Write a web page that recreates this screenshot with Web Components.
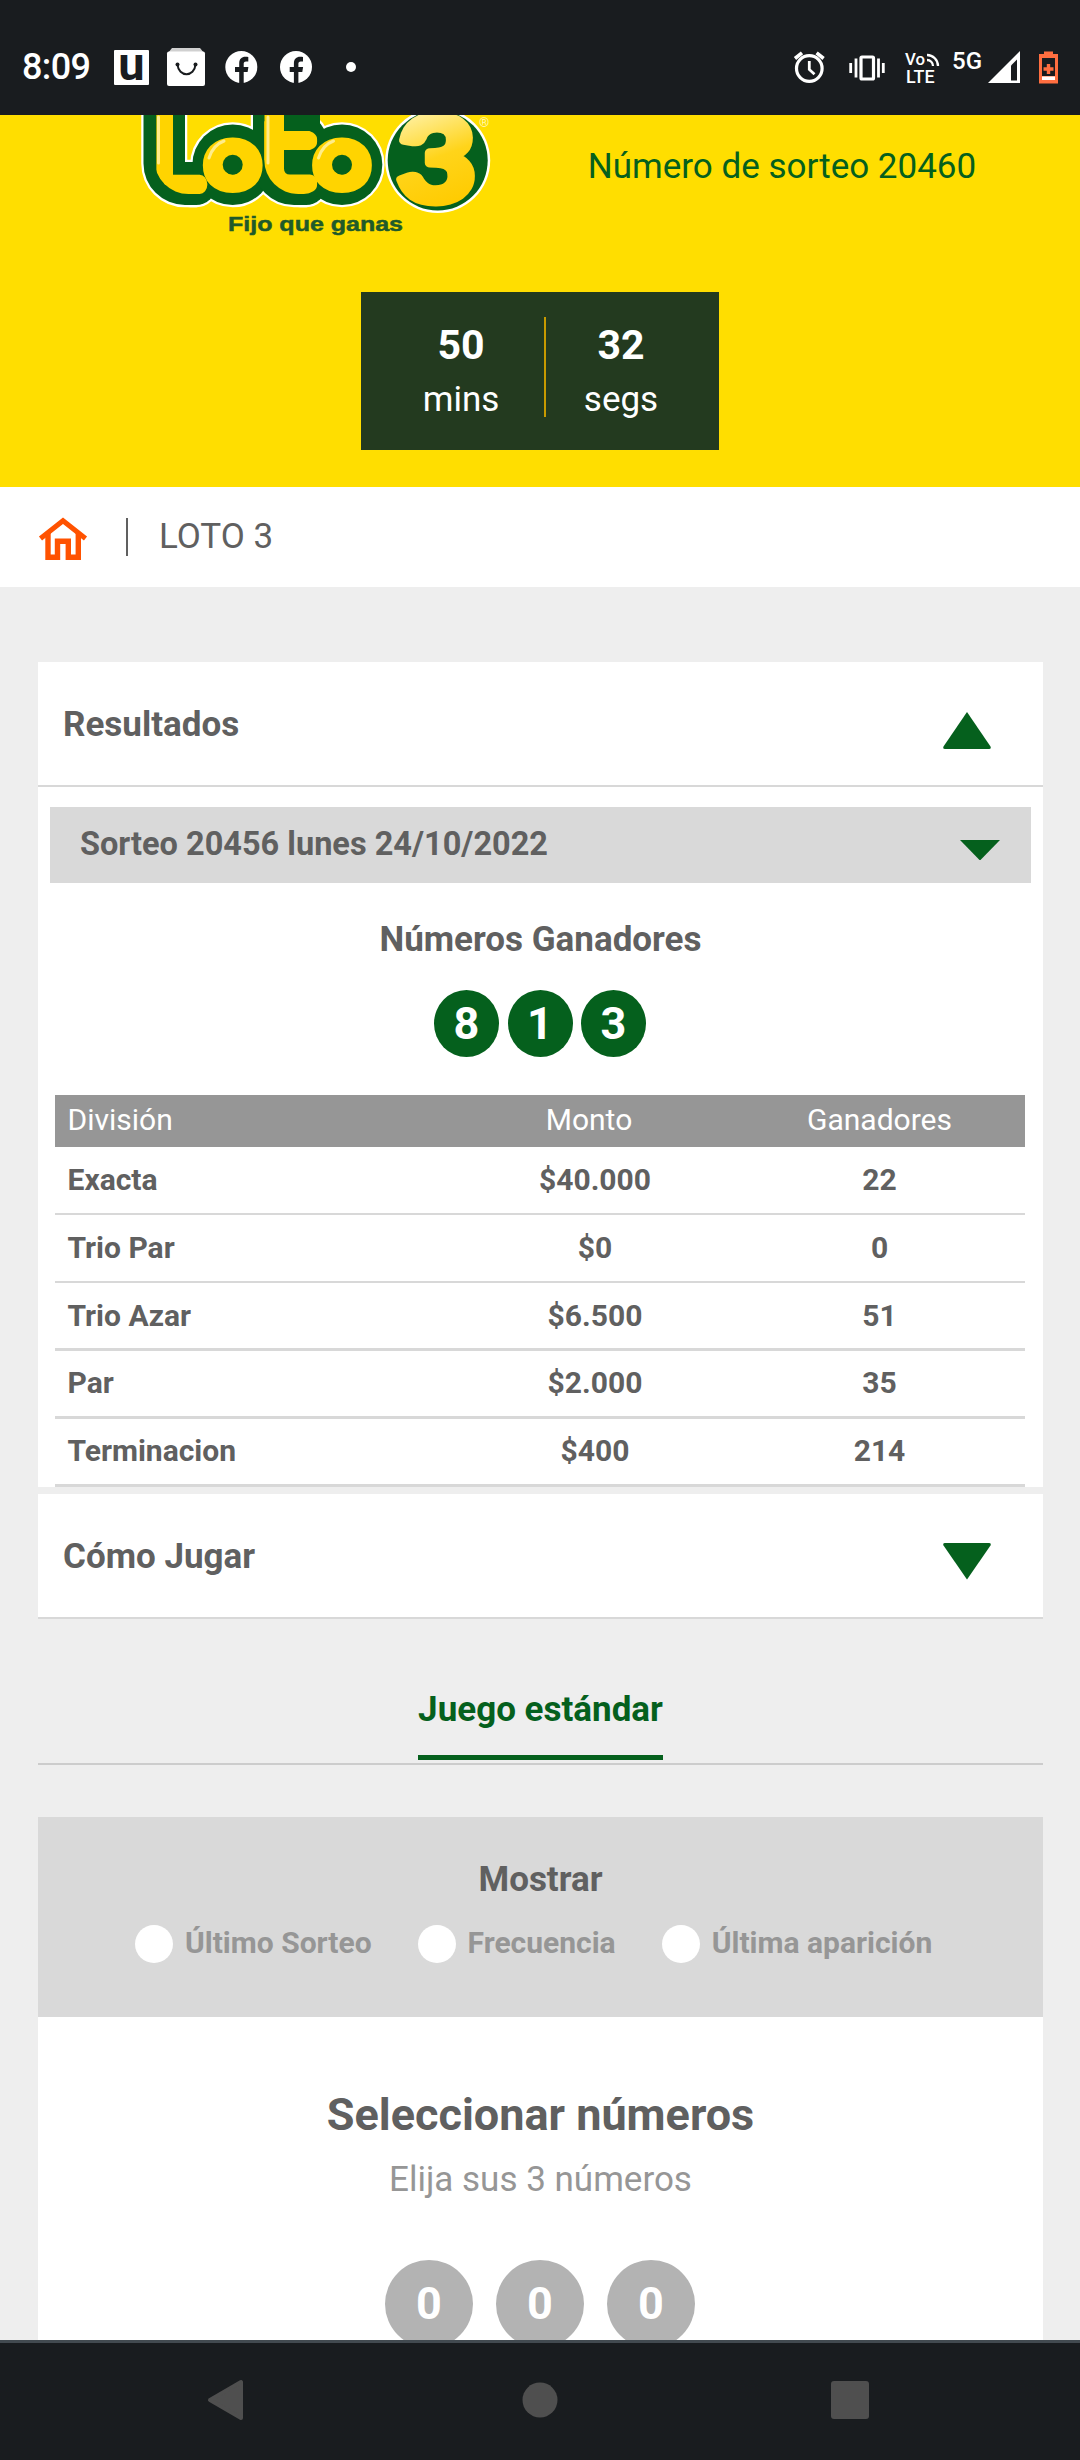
<!DOCTYPE html>
<html lang="es">
<head>
<meta charset="utf-8">
<title>Loto 3</title>
<style>
	html { height: 2460px; overflow: hidden; }
	body {
		margin: 0;
		width: 1080px;
		height: 2460px;
		overflow: hidden;
		display: flex;
		flex-direction: column;
		background: #eee;
		font-family: Roboto, "Liberation Sans", sans-serif;
		font-size: 35px;
		color: #606060;
		--green: #05601d;
		--line: #d8d8d8;
	}
	main { flex: 1; min-height: 0; overflow: hidden; padding: 75px 37px 0 38px; }
</style>
</head>
<body>
<status-bar></status-bar>
<game-header>
	<loto-logo slot="logo"></loto-logo>
	<span slot="draw">Número de sorteo 20460</span>
	<count-down slot="timer" mins="50" segs="32"></count-down>
</game-header>
<bread-crumb>LOTO 3</bread-crumb>
<main>
	<accordion-card open>
		<span slot="title">Resultados</span>
		<draw-select>Sorteo 20456 lunes 24/10/2022</draw-select>
		<winning-numbers numbers="8,1,3">Números Ganadores</winning-numbers>
		<prize-table></prize-table>
	</accordion-card>
	<accordion-card>
		<span slot="title">Cómo Jugar</span>
	</accordion-card>
	<game-tabs>Juego estándar</game-tabs>
	<show-options>
		<span slot="title">Mostrar</span>
		<radio-option>Último Sorteo</radio-option>
		<radio-option>Frecuencia</radio-option>
		<radio-option>Última aparición</radio-option>
	</show-options>
	<number-picker>
		<span slot="title">Seleccionar números</span>
		<span slot="hint">Elija sus 3 números</span>
		<number-ball size="big">0</number-ball>
		<number-ball size="big">0</number-ball>
		<number-ball size="big">0</number-ball>
	</number-picker>
</main>
<nav-bar></nav-bar>

<script>
class StatusBar extends HTMLElement {

	constructor() {
		super();
		this.shadow = this.attachShadow({mode: 'open'});
	}
	connectedCallback() {
		this.shadow.innerHTML = `
		<style>
		:host {
			display: flex;
			justify-content: space-between;
			flex: none;
			height: 115px;
			background: #191c1f;
			color: #fff;
		}
		.side { display: flex; align-items: center; height: 134px; }
		.time { width: 90px; margin-left: 22px; font-size: 36px; line-height: 44px; font-weight: 500; letter-spacing: -0.6px; white-space: nowrap; }
		svg { display: block; }
		svg text { font-family: Roboto, sans-serif; fill: #fff; }
		</style>
		<div class="side">
			<span class="time">8:09</span>
			<svg width="250" height="60" viewBox="112 36 250 60">
				<rect x="114" y="49" width="35" height="35" rx="1" fill="#fff"/>
				<text x="131.5" y="78.500" text-anchor="middle" font-size="47" font-weight="700" style="fill:#191c1f">u</text>
				<path d="M172 47h28l4 5h-36z" fill="#d0d0d0"/>
				<rect x="167" y="50.500" width="38" height="34.500" rx="2" fill="#fff"/>
				<path d="M177.500 63.500c1 13 17 13 18 0" fill="none" stroke="#191c1f" stroke-width="2"/>
				<circle cx="177.500" cy="63.500" r="2" fill="#191c1f"/>
				<circle cx="195.500" cy="63.500" r="2" fill="#191c1f"/>
				<g id="fb">
					<circle cx="241.300" cy="66" r="16" fill="#fff"/>
					<path d="M239.200 83v-12h-4.200v-5h4.200v-3.500c0-4.500 2.500-6.700 6.200-6.700 1.100 0 2.100.1 2.900.2v4.500h-2.200c-1.900 0-2.400 1-2.400 2.300v3.200h4.700l-.8 5h-3.900v12z" fill="#191c1f"/>
				</g>
				<use href="#fb" x="54.700"/>
				<circle cx="351" cy="66" r="5" fill="#fff"/>
			</svg>
		</div>
		<div class="side">
			<svg width="290" height="44" viewBox="790 44 290 44">
				<g fill="none" stroke="#fff">
					<circle cx="809.300" cy="67.500" r="12.800" stroke-width="3.200"/>
					<path d="M809.300 60v8.500l5.200 4.700" stroke-width="2.800"/>
					<path d="M795 57.500l7-5.700M823.600 57.500l-7-5.700" stroke-width="3.600"/>
					<rect x="861" y="56" width="12.500" height="22" rx="1" stroke-width="3.200"/>
					<path d="M856 57.500v19M878.500 57.500v19" stroke-width="2.800"/>
					<path d="M850.700 62v10M883.300 62v10" stroke-width="2.800"/>
					<path d="M927 59a6 6 0 0 1 6 6M927 54a11 11 0 0 1 11 11" stroke-width="2.300"/>
				</g>
				<text x="905" y="64" font-size="17" font-weight="500" textLength="20" lengthAdjust="spacingAndGlyphs">Vo</text>
				<text x="906" y="81.500" font-size="17.500" font-weight="500" textLength="28.500" lengthAdjust="spacingAndGlyphs">LTE</text>
				<text x="952" y="67.500" font-size="23.500" font-weight="500" textLength="30" lengthAdjust="spacingAndGlyphs">5G</text>
				<path d="M988 82L1020 50v32z" fill="#fff"/>
				<path d="M1011 64.500l6-6v21h-6z" fill="#191c1f"/>
				<path d="M1044 53v-2.500h9V53h5v29.500h-19V53z" fill="#ff6e40"/>
				<rect x="1042" y="57" width="13" height="18" fill="#191c1f"/>
				<rect x="1042" y="75.500" width="13" height="3.500" fill="#fff"/>
				<path d="M1048.500 63v10M1043.500 68h10" stroke="#ff6e40" stroke-width="3.400"/>
			</svg>
		</div>`;
	}
}

class LotoLogo extends HTMLElement {

	constructor() {
		super();
		this.shadow = this.attachShadow({mode: 'open'});
	}
	connectedCallback() {
		this.shadow.innerHTML = `
		<style>
		:host { display: block; width: 360px; height: 130px; overflow: hidden; }
		svg { display: block; }
		.letter { font-family: Lato, Roboto, sans-serif; font-weight: 100; fill: #ffd400; stroke: #ffd400; stroke-linejoin: round; }
		.tee { font-family: "DejaVu Sans", sans-serif; font-weight: 200; }
		.three { font-family: Lato, sans-serif; font-weight: 700; fill: url(#gold3); stroke: url(#gold3); stroke-linejoin: round; }
		.motto { font-family: "Liberation Sans", Arial, sans-serif; font-weight: 700; font-size: 21px; fill: #1f5a2a; stroke: #1f5a2a; stroke-width: .5; }
		</style>
		<svg width="360" height="130" viewBox="140 115 360 130">
			<defs>
				<linearGradient id="gold3" gradientUnits="userSpaceOnUse" x1="415" y1="112" x2="450" y2="206">
					<stop offset="0" stop-color="#fff0a0"/>
					<stop offset=".5" stop-color="#ffd41a"/>
					<stop offset="1" stop-color="#ffcb00"/>
				</linearGradient>
				<clipPath id="curveL"><path d="M154.500 90h60v104h-26a34 34 0 0 1-34-34z"/></clipPath>
				<clipPath id="curveT"><path d="M264.300 90h60v104h-26a34 34 0 0 1-34-34z"/></clipPath>
				<g id="back">
					<path d="M143.500 90H185v72h12v43h-12a41.500 41.500 0 0 1-41.500-41.500z"/>
					<rect x="170" y="163" width="46" height="42" rx="20"/>
					<circle cx="232.700" cy="164.700" r="40.300"/>
					<path d="M253 90h40v28h17q8 0 14 11v36h-17v40h-13a41 41 0 0 1-41-41z"/>
					<rect x="280" y="163" width="46" height="42" rx="20"/>
					<circle cx="342" cy="164.700" r="40.300"/>
				</g>
			</defs>
			<use href="#back" fill="#fff" stroke="#fff" stroke-width="4.500" stroke-linejoin="round"/>
			<circle cx="437.700" cy="160.500" r="52.500" fill="#fff"/>
			<use href="#back" fill="#05601d"/>
			<circle cx="437.700" cy="160.500" r="50" fill="#05601d"/>
			<g clip-path="url(#curveL)"><text class="letter" x="153" y="184.500" font-size="112" stroke-width="18" textLength="48" lengthAdjust="spacingAndGlyphs">L</text></g>
			<text class="letter" x="208" y="184" font-size="76" stroke-width="18" textLength="49.500" lengthAdjust="spacingAndGlyphs">o</text>
			<circle cx="232.700" cy="164.700" r="10" fill="#05601d"/>
			<g clip-path="url(#curveT)">
				<text class="letter tee" x="261.500" y="184.500" font-size="83" stroke-width="18" textLength="48" lengthAdjust="spacingAndGlyphs">t</text>
				<rect x="264.300" y="100" width="19.700" height="60" fill="#ffd400"/>
				<rect x="284" y="100" width="36" height="31" fill="#05601d"/>
				<path d="M284 150h34v24.500h-28q-6 0-6-6z" fill="#05601d"/>
			</g>
			<text class="letter" x="317.300" y="184" font-size="76" stroke-width="18" textLength="49.500" lengthAdjust="spacingAndGlyphs">o</text>
			<circle cx="342" cy="164.700" r="10" fill="#05601d"/>
			<text class="three" x="397" y="200.500" font-size="116" stroke-width="9" textLength="79" lengthAdjust="spacingAndGlyphs">3</text>
			<g fill="none" stroke="#fff6b8" stroke-width="3" stroke-linecap="round" opacity=".75">
				<path d="M158.500 117v46"/>
				<path d="M209 158q4-13 15-17"/>
				<path d="M268 117v46"/>
				<path d="M318.500 158q4-13 15-17"/>
			</g>
			<text x="484" y="127" text-anchor="middle" font-size="13" font-family="Roboto, sans-serif" fill="#fff6b0">®</text>
			<text class="motto" x="228" y="230.500" textLength="175" lengthAdjust="spacingAndGlyphs">Fijo que ganas</text>
		</svg>`;
	}
}

class CountDown extends HTMLElement {

	constructor() {
		super();
		this.shadow = this.attachShadow({mode: 'open'});
	}
	connectedCallback() {
		this.shadow.innerHTML = `
		<style>
		:host {
			box-sizing: border-box;
			display: flex;
			width: 358px;
			height: 158px;
			padding: 25px 23px 33px 17px;
			background: #233a1f;
			color: #fff;
			text-align: center;
		}
		div { box-sizing: border-box; width: 150px; height: 100px; }
		.mins { width: 168px; border-right: 2px solid #c79a00; }
		b, span { display: block; line-height: 54px; }
		b { font-size: 41px; line-height: 56px; }
		</style>
		<div class="mins"><b>${this.getAttribute('mins')}</b><span>mins</span></div>
		<div><b>${this.getAttribute('segs')}</b><span>segs</span></div>`;
	}
}

class GameHeader extends HTMLElement {

	constructor() {
		super();
		this.shadow = this.attachShadow({mode: 'open'});
	}
	connectedCallback() {
		this.shadow.innerHTML = `
		<style>
		:host { display: block; flex: none; height: 372px; background: #ffde00; color: var(--green); }
		.top { display: flex; height: 177px; padding-left: 140px; }
		.draw { width: 396px; margin: 31px 0 0 84px; line-height: 42px; text-align: center; white-space: nowrap; }
		.timer { display: flex; justify-content: center; }
		</style>
		<div class="top">
			<slot name="logo"></slot>
			<div class="draw"><slot name="draw"></slot></div>
		</div>
		<div class="timer"><slot name="timer"></slot></div>`;
	}
}

class BreadCrumb extends HTMLElement {

	constructor() {
		super();
		this.shadow = this.attachShadow({mode: 'open'});
	}
	connectedCallback() {
		this.shadow.innerHTML = `
		<style>
		:host { display: flex; flex: none; height: 100px; background: #fff; }
		svg { margin: 29px 0 0 38px; }
		i { width: 2px; height: 38px; margin: 31px 31px 0 37px; background: #606060; }
		span { line-height: 100px; }
		</style>
		<svg width="51" height="45" viewBox="0 0 51 45" fill="none" stroke="#ff5200" stroke-width="5.400">
			<path d="M2.500 22.500L25 4.700l22.500 17.800" stroke-width="5"/>
			<path d="M10 17v24.300h9.500v-16h10.800v16h10V17"/>
		</svg>
		<i></i>
		<span><slot></slot></span>`;
	}
}

class AccordionCard extends HTMLElement {

	constructor() {
		super();
		this.shadow = this.attachShadow({mode: 'open'});
	}
	connectedCallback() {
		let open = this.hasAttribute('open');
		let arrow = open ? 'M24 0L47.500 34.500Q48.500 37 46 37H2Q-.5 37 .5 34.500z' : 'M24 36.500L47.500 2.500Q48.500 0 46 0H2Q-.5 0 .5 2.500z';
		this.shadow.innerHTML = `
		<style>
		:host { display: block; background: #fff; margin-bottom: 7px; }
		.head {
			display: flex;
			justify-content: space-between;
			height: 123px;
			padding: 0 52px 0 25px;
			border-bottom: 2px solid var(--line);
			line-height: 125px;
			font-weight: 700;
		}
		svg { margin-top: ${open ? 50 : 49}px; }
		</style>
		<div class="head">
			<slot name="title"></slot>
			<svg width="48" height="37" viewBox="0 0 48 37" fill="#05601d"><path d="${arrow}"/></svg>
		</div>
		<slot></slot>`;
	}
}

class DrawSelect extends HTMLElement {

	constructor() {
		super();
		this.shadow = this.attachShadow({mode: 'open'});
	}
	connectedCallback() {
		this.shadow.innerHTML = `
		<style>
		:host {
			display: flex;
			justify-content: space-between;
			height: 76px;
			margin: 20px 12px 0;
			padding: 0 31px 0 30px;
			background: #d9d9d9;
			font-size: 32.5px;
			line-height: 75px;
			font-weight: 700;
		}
		svg { margin-top: 33px; }
		</style>
		<span><slot></slot></span>
		<svg width="40" height="20" viewBox="0 0 40 20"><path d="M0 0h40L20 20.500z" fill="#05601d"/></svg>`;
	}
}

class NumberBall extends HTMLElement {

	constructor() {
		super();
		this.shadow = this.attachShadow({mode: 'open'});
	}
	connectedCallback() {
		this.shadow.innerHTML = `
		<style>
		:host {
			display: block;
			flex: none;
			width: 65px;
			height: 67px;
			border-radius: 50%;
			background: var(--green);
			color: #fff;
			font-size: 45px;
			font-weight: 700;
			line-height: 68px;
			text-align: center;
		}
		:host([size="big"]) { width: 88px; height: 88px; line-height: 87px; background: #b3b3b3; }
		</style>
		<slot></slot>`;
	}
}

class WinningNumbers extends HTMLElement {

	constructor() {
		super();
		this.shadow = this.attachShadow({mode: 'open'});
	}
	connectedCallback() {
		let balls = this.getAttribute('numbers').split(',').map(n => `<number-ball>${n}</number-ball>`).join('');
		this.shadow.innerHTML = `
		<style>
		:host { display: block; height: 212px; text-align: center; }
		.title { padding-top: 37px; line-height: 40px; font-weight: 700; }
		.balls { display: flex; justify-content: center; gap: 8.500px; margin: 30px 1px 0 0; }
		</style>
		<div class="title"><slot></slot></div>
		<div class="balls">${balls}</div>`;
	}
}

class PrizeTable extends HTMLElement {

	constructor() {
		super();
		this.shadow = this.attachShadow({mode: 'open'});
		this.rows = [
			['Exacta', '$40.000', '22'],
			['Trio Par', '$0', '0'],
			['Trio Azar', '$6.500', '51'],
			['Par', '$2.000', '35'],
			['Terminacion', '$400', '214']
		];
	}
	connectedCallback() {
		let body = this.rows.map(r => `<div class="row"><span>${r[0]}</span><span>${r[1]}</span><span>${r[2]}</span></div>`).join('');
		this.shadow.innerHTML = `
		<style>
		:host { display: block; margin: 0 18px 0 17px; font-size: 30px; }
		.row {
			box-sizing: border-box;
			display: grid;
			grid-template-columns: 401px 278px 291px;
			height: 68px;
			border-bottom: 2px solid var(--line);
			line-height: 66px;
			font-weight: 700;
			text-align: center;
		}
		.row:nth-child(n+5) { border-bottom-width: 3px; }
		.row:nth-child(n+6) { line-height: 64px; }
		.row span:first-child { text-align: left; padding-left: 12.5px; }
		.row.head { height: 52px; line-height: 50px; border: 0; background: #969696; color: #fff; font-weight: 400; }
		.head span:nth-child(2) { padding-right: 12px; }
		</style>
		<div class="row head"><span>División</span><span>Monto</span><span>Ganadores</span></div>
		${body}`;
	}
}

class GameTabs extends HTMLElement {

	constructor() {
		super();
		this.shadow = this.attachShadow({mode: 'open'});
	}
	connectedCallback() {
		this.shadow.innerHTML = `
		<style>
		:host {
			display: flex;
			justify-content: center;
			height: 137px;
			border-bottom: 2px solid #ccc;
			color: var(--green);
			font-weight: 700;
		}
		span { height: 65px; padding-top: 64px; border-bottom: 5px solid var(--green); line-height: 40px; }
		</style>
		<span><slot></slot></span>`;
	}
}

class RadioOption extends HTMLElement {

	constructor() {
		super();
		this.shadow = this.attachShadow({mode: 'open'});
	}
	connectedCallback() {
		this.shadow.innerHTML = `
		<style>
		:host { display: flex; gap: 12px; font-size: 30px; line-height: 35px; font-weight: 700; color: #969696; white-space: nowrap; }
		i { width: 38px; height: 38px; border-radius: 50%; background: #fff; }
		</style>
		<i></i><span><slot></slot></span>`;
	}
}

class ShowOptions extends HTMLElement {

	constructor() {
		super();
		this.shadow = this.attachShadow({mode: 'open'});
	}
	connectedCallback() {
		this.shadow.innerHTML = `
		<style>
		:host { display: block; height: 200px; margin-top: 52px; background: #d9d9d9; text-align: center; }
		.title { padding-top: 43px; line-height: 40px; font-weight: 700; }
		.list { display: flex; gap: 46px; margin: 25px 0 0 97px; }
		</style>
		<div class="title"><slot name="title"></slot></div>
		<div class="list"><slot></slot></div>`;
	}
}

class NumberPicker extends HTMLElement {

	constructor() {
		super();
		this.shadow = this.attachShadow({mode: 'open'});
	}
	connectedCallback() {
		this.shadow.innerHTML = `
		<style>
		:host { display: block; height: 400px; background: #fff; text-align: center; }
		.title { padding-top: 73px; font-size: 45px; line-height: 50px; font-weight: 700; }
		.hint { margin-top: 20px; line-height: 40px; color: #969696; }
		.balls { display: flex; justify-content: center; gap: 23px; margin: 60px 1px 0 0; }
		</style>
		<div class="title"><slot name="title"></slot></div>
		<div class="hint"><slot name="hint"></slot></div>
		<div class="balls"><slot></slot></div>`;
	}
}

class NavBar extends HTMLElement {

	constructor() {
		super();
		this.shadow = this.attachShadow({mode: 'open'});
	}
	connectedCallback() {
		this.shadow.innerHTML = `
		<style>
		:host {
			display: grid;
			grid-template-columns: 37px 36px 38px;
			justify-content: space-between;
			align-items: center;
			flex: none;
			height: 114px;
			padding: 0 211px 3px 207px;
			border-top: 3px solid #424a50;
			background: #191c1f;
		}
		.home { margin-left: 2px; }
		</style>
		<svg width="37" height="42" viewBox="0 0 37 42"><path d="M3 21L34 3v36z" fill="#4f4f4f" stroke="#4f4f4f" stroke-width="4" stroke-linejoin="round"/></svg>
		<svg class="home" width="36" height="36" viewBox="0 0 36 36"><circle cx="18" cy="18" r="17.500" fill="#4f4f4f"/></svg>
		<svg width="38" height="38" viewBox="0 0 38 38"><rect width="38" height="38" rx="3" fill="#4f4f4f"/></svg>`;
	}
}

customElements.define('status-bar', StatusBar);
customElements.define('loto-logo', LotoLogo);
customElements.define('count-down', CountDown);
customElements.define('game-header', GameHeader);
customElements.define('bread-crumb', BreadCrumb);
customElements.define('accordion-card', AccordionCard);
customElements.define('draw-select', DrawSelect);
customElements.define('number-ball', NumberBall);
customElements.define('winning-numbers', WinningNumbers);
customElements.define('prize-table', PrizeTable);
customElements.define('game-tabs', GameTabs);
customElements.define('radio-option', RadioOption);
customElements.define('show-options', ShowOptions);
customElements.define('number-picker', NumberPicker);
customElements.define('nav-bar', NavBar);
</script>
</body>
</html>
